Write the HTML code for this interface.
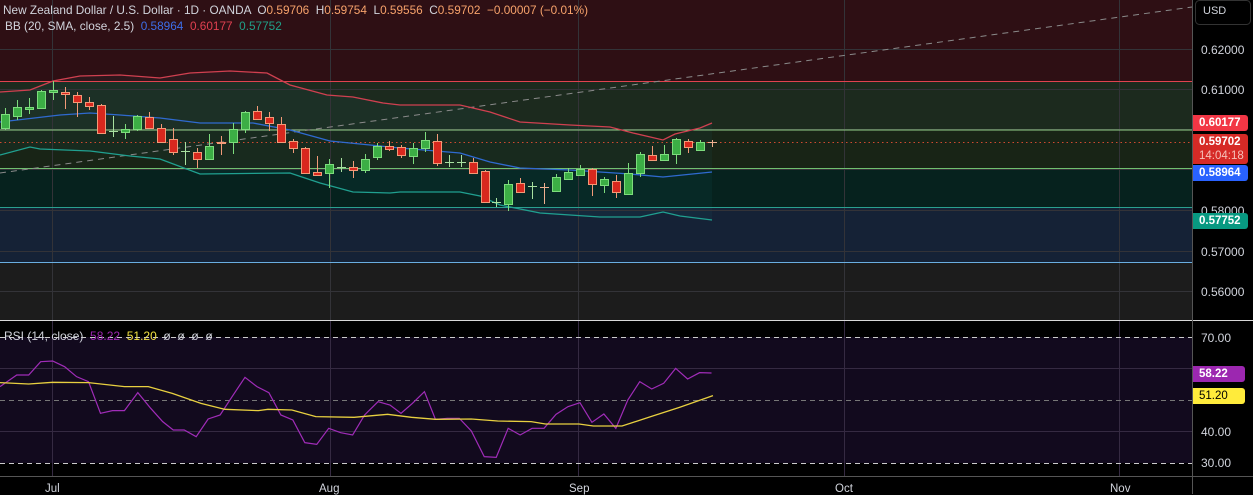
<!DOCTYPE html>
<html><head><meta charset="utf-8"><style>
html,body{margin:0;padding:0;background:#000;width:1253px;height:494px;overflow:hidden;font-family:"Liberation Sans",sans-serif;}
.t{position:absolute;font-size:11.8px;color:#d1d4dc;white-space:nowrap}
.ax{position:absolute;left:1201px;font-size:12px;color:#d1d4dc}
.tag{position:absolute;left:1193px;width:55px;font-size:11.5px;color:#fff;padding-left:6px;box-sizing:border-box;border-radius:0 3px 3px 0;line-height:16px;font-weight:bold}
.tm{position:absolute;top:483px;font-size:11.5px;color:#d1d4dc}
</style></head><body>
<svg width="1253" height="494" style="position:absolute;left:0;top:0">
<rect x="0" y="0" width="1192" height="81" fill="#2e0f14"/>
<rect x="0" y="81" width="1192" height="49" fill="#1c2a1e"/>
<rect x="0" y="130" width="1192" height="38" fill="#182416"/>
<rect x="0" y="168" width="1192" height="39" fill="#06221e"/>
<rect x="0" y="207" width="1192" height="55" fill="#152236"/>
<rect x="0" y="262" width="1192" height="58" fill="#1c1c1c"/>
<polygon fill="rgba(40,160,170,0.06)" points="0,92 30,90 53,81 80,76 120,75 160,78 190,73 230,71 267,73 290,85 327,95 353,97 383,103 400,105 460,105 490,112 520,122 570,125 610,127 633,133 663,140 675,134 700,128 712,123 712,220 680,216 663,212 640,217 600,217 540,213 500,205 480,196 460,192 400,192 390,193 353,192 320,183 290,173 200,174 160,159 130,156 90,151 40,149 30,147 0,155"/>
<g stroke="#333338" stroke-width="1">
<line x1="0" y1="49.5" x2="1192" y2="49.5"/><line x1="0" y1="89.5" x2="1192" y2="89.5"/><line x1="0" y1="129.5" x2="1192" y2="129.5"/><line x1="0" y1="169.5" x2="1192" y2="169.5"/><line x1="0" y1="210.5" x2="1192" y2="210.5"/><line x1="0" y1="251.5" x2="1192" y2="251.5"/><line x1="0" y1="291.5" x2="1192" y2="291.5"/>
<line x1="52.5" y1="0" x2="52.5" y2="476"/><line x1="330.5" y1="0" x2="330.5" y2="476"/><line x1="578.5" y1="0" x2="578.5" y2="476"/><line x1="844.5" y1="0" x2="844.5" y2="476"/><line x1="1119.5" y1="0" x2="1119.5" y2="476"/>
</g>
<line x1="0" y1="81.5" x2="1192" y2="81.5" stroke="#e0434f"/>
<line x1="0" y1="130" x2="1192" y2="130" stroke="#95d08a"/>
<line x1="0" y1="168.5" x2="1192" y2="168.5" stroke="#6fc070"/>
<line x1="0" y1="207.5" x2="1192" y2="207.5" stroke="#2aa090"/>
<line x1="0" y1="262.5" x2="1192" y2="262.5" stroke="#6aaee0"/>
<line x1="0" y1="173" x2="1192" y2="7" stroke="#8a8a8a" stroke-dasharray="6,5"/>
<line x1="0" y1="142.5" x2="1192" y2="142.5" stroke="#d04a30" stroke-dasharray="1.5,3"/>
<polyline fill="none" stroke="#d04050" stroke-width="1.3" points="0,92 30,90 53,81 80,76 120,75 160,78 190,73 230,71 267,73 290,85 327,95 353,97 383,103 400,105 460,105 490,112 520,122 570,125 610,127 633,133 663,140 675,134 700,128 712,123"/>
<polyline fill="none" stroke="#2f6ad0" stroke-width="1.3" points="0,122 60,115 90,113 120,115 160,118 200,123 253,123 290,130 330,141 370,145 400,148 460,153 490,162 520,168 570,170 630,174 663,177 712,172"/>
<polyline fill="none" stroke="#20a090" stroke-width="1.3" points="0,155 30,147 40,149 90,151 130,156 160,159 200,174 290,173 320,183 353,192 390,193 400,192 460,192 480,196 500,205 540,213 600,217 640,217 663,212 680,216 712,220"/>
<g stroke-width="1">
<g stroke="#7ddc7d" fill="#3cae45">
<line x1="5.5" y1="108" x2="5.5" y2="130"/><rect x="1.5" y="114.5" width="8" height="14"/>
<line x1="17.5" y1="100" x2="17.5" y2="120"/><rect x="13.5" y="107.5" width="8" height="9"/>
<line x1="29.5" y1="98" x2="29.5" y2="114"/><rect x="25.5" y="107.5" width="8" height="2"/>
<line x1="41.5" y1="90" x2="41.5" y2="109"/><rect x="37.5" y="91.5" width="8" height="17"/>
<line x1="53.5" y1="81" x2="53.5" y2="100"/><rect x="49.5" y="90.5" width="8" height="2"/>
<line x1="125.5" y1="124" x2="125.5" y2="139"/><rect x="121.5" y="129.5" width="8" height="3"/>
<line x1="137.5" y1="115" x2="137.5" y2="131"/><rect x="133.5" y="116.5" width="8" height="13"/>
<line x1="209.5" y1="134" x2="209.5" y2="160"/><rect x="205.5" y="146.5" width="8" height="13"/>
<line x1="233.5" y1="123" x2="233.5" y2="154"/><rect x="229.5" y="129.5" width="8" height="13"/>
<line x1="245.5" y1="111" x2="245.5" y2="133"/><rect x="241.5" y="112.5" width="8" height="17"/>
<line x1="329.5" y1="159" x2="329.5" y2="188"/><rect x="325.5" y="164.5" width="8" height="9"/>
<line x1="365.5" y1="154" x2="365.5" y2="173"/><rect x="361.5" y="159.5" width="8" height="11"/>
<line x1="377.5" y1="143" x2="377.5" y2="160"/><rect x="373.5" y="146.5" width="8" height="11"/>
<line x1="413.5" y1="143" x2="413.5" y2="164"/><rect x="409.5" y="148.5" width="8" height="8"/>
<line x1="425.5" y1="132" x2="425.5" y2="152"/><rect x="421.5" y="140.5" width="8" height="8"/>
<line x1="508.5" y1="180" x2="508.5" y2="211"/><rect x="504.5" y="184.5" width="8" height="20"/>
<line x1="556.5" y1="174" x2="556.5" y2="192"/><rect x="552.5" y="177.5" width="8" height="14"/>
<line x1="568.5" y1="168" x2="568.5" y2="180"/><rect x="564.5" y="172.5" width="8" height="7"/>
<line x1="580.5" y1="165" x2="580.5" y2="176"/><rect x="576.5" y="169.5" width="8" height="6"/>
<line x1="604.5" y1="177" x2="604.5" y2="193"/><rect x="600.5" y="179.5" width="8" height="6"/>
<line x1="628.5" y1="163" x2="628.5" y2="195"/><rect x="624.5" y="173.5" width="8" height="21"/>
<line x1="640.5" y1="152" x2="640.5" y2="177"/><rect x="636.5" y="154.5" width="8" height="19"/>
<line x1="664.5" y1="145" x2="664.5" y2="161"/><rect x="660.5" y="154.5" width="8" height="6"/>
<line x1="676.5" y1="138" x2="676.5" y2="164"/><rect x="672.5" y="139.5" width="8" height="15"/>
<line x1="700.5" y1="140" x2="700.5" y2="151"/><rect x="696.5" y="142.5" width="8" height="8"/>
</g>
<g stroke="#f29a78" fill="#d8281e">
<line x1="65.5" y1="87" x2="65.5" y2="109"/><rect x="61.5" y="92.5" width="8" height="2"/>
<line x1="77.5" y1="92" x2="77.5" y2="117"/><rect x="73.5" y="95.5" width="8" height="7"/>
<line x1="89.5" y1="97" x2="89.5" y2="110"/><rect x="85.5" y="102.5" width="8" height="4"/>
<line x1="101.5" y1="104" x2="101.5" y2="134"/><rect x="97.5" y="105.5" width="8" height="28"/>
<line x1="149.5" y1="112" x2="149.5" y2="129"/><rect x="145.5" y="117.5" width="8" height="11"/>
<line x1="161.5" y1="124" x2="161.5" y2="143"/><rect x="157.5" y="128.5" width="8" height="14"/>
<line x1="173.5" y1="128" x2="173.5" y2="155"/><rect x="169.5" y="139.5" width="8" height="13"/>
<line x1="197.5" y1="148" x2="197.5" y2="168"/><rect x="193.5" y="152.5" width="8" height="7"/>
<line x1="221.5" y1="136" x2="221.5" y2="155"/><rect x="217.5" y="142.5" width="8" height="1"/>
<line x1="257.5" y1="106" x2="257.5" y2="120"/><rect x="253.5" y="111.5" width="8" height="8"/>
<line x1="269.5" y1="112" x2="269.5" y2="131"/><rect x="265.5" y="117.5" width="8" height="6"/>
<line x1="281.5" y1="117" x2="281.5" y2="143"/><rect x="277.5" y="124.5" width="8" height="18"/>
<line x1="293.5" y1="139" x2="293.5" y2="153"/><rect x="289.5" y="141.5" width="8" height="7"/>
<line x1="305.5" y1="147" x2="305.5" y2="174"/><rect x="301.5" y="148.5" width="8" height="25"/>
<line x1="317.5" y1="156" x2="317.5" y2="176"/><rect x="313.5" y="172.5" width="8" height="3"/>
<line x1="353.5" y1="161" x2="353.5" y2="178"/><rect x="349.5" y="167.5" width="8" height="3"/>
<line x1="389.5" y1="141" x2="389.5" y2="151"/><rect x="385.5" y="146.5" width="8" height="3"/>
<line x1="401.5" y1="145" x2="401.5" y2="158"/><rect x="397.5" y="147.5" width="8" height="8"/>
<line x1="437.5" y1="134" x2="437.5" y2="166"/><rect x="433.5" y="141.5" width="8" height="22"/>
<line x1="473.5" y1="158" x2="473.5" y2="174"/><rect x="469.5" y="162.5" width="8" height="11"/>
<line x1="485.5" y1="170" x2="485.5" y2="203"/><rect x="481.5" y="171.5" width="8" height="31"/>
<line x1="520.5" y1="178" x2="520.5" y2="193"/><rect x="516.5" y="183.5" width="8" height="9"/>
<line x1="592.5" y1="168" x2="592.5" y2="196"/><rect x="588.5" y="169.5" width="8" height="15"/>
<line x1="616.5" y1="175" x2="616.5" y2="198"/><rect x="612.5" y="181.5" width="8" height="11"/>
<line x1="652.5" y1="146" x2="652.5" y2="161"/><rect x="648.5" y="155.5" width="8" height="5"/>
<line x1="688.5" y1="139" x2="688.5" y2="153"/><rect x="684.5" y="141.5" width="8" height="6"/>
</g>
<g stroke="#a8e0a0">
<line x1="113.5" y1="116" x2="113.5" y2="137"/><line x1="109" y1="131.5" x2="118" y2="131.5"/>
<line x1="185.5" y1="142" x2="185.5" y2="165"/><line x1="181" y1="151.5" x2="190" y2="151.5"/>
<line x1="341.5" y1="158" x2="341.5" y2="172"/><line x1="337" y1="167.5" x2="346" y2="167.5"/>
<line x1="449.5" y1="155" x2="449.5" y2="167"/><line x1="445" y1="162.5" x2="454" y2="162.5"/>
<line x1="461.5" y1="155" x2="461.5" y2="167"/><line x1="457" y1="162.5" x2="466" y2="162.5"/>
<line x1="496.5" y1="198" x2="496.5" y2="207"/><line x1="492" y1="202.5" x2="501" y2="202.5"/>
<line x1="532.5" y1="182" x2="532.5" y2="199"/><line x1="528" y1="186.5" x2="537" y2="186.5"/>
</g>
<g stroke="#f0b090">
<line x1="544.5" y1="183" x2="544.5" y2="204"/><line x1="540" y1="187.5" x2="549" y2="187.5"/>
<line x1="712.5" y1="140" x2="712.5" y2="147"/><line x1="708" y1="142.5" x2="717" y2="142.5"/>
</g>
</g>
<line x1="0" y1="320.5" x2="1253" y2="320.5" stroke="#d8d8d8"/>
<line x1="1192.5" y1="0" x2="1192.5" y2="494" stroke="#555"/>
<line x1="0" y1="476.5" x2="1253" y2="476.5" stroke="#555"/>
<rect x="0" y="337" width="1192" height="126" fill="#120a1e"/>
<g stroke="#352a42"><line x1="0" y1="368.5" x2="1192" y2="368.5"/><line x1="0" y1="431.5" x2="1192" y2="431.5"/>
<line x1="52.5" y1="321" x2="52.5" y2="476"/><line x1="330.5" y1="321" x2="330.5" y2="476"/><line x1="578.5" y1="321" x2="578.5" y2="476"/><line x1="844.5" y1="321" x2="844.5" y2="476"/><line x1="1119.5" y1="321" x2="1119.5" y2="476"/></g>
<line x1="0" y1="337.5" x2="1192" y2="337.5" stroke="#ccc" stroke-dasharray="5,4"/>
<line x1="0" y1="400.5" x2="1192" y2="400.5" stroke="#777" stroke-dasharray="5,4"/>
<line x1="0" y1="463.5" x2="1192" y2="463.5" stroke="#ccc" stroke-dasharray="5,4"/>
<g transform="translate(0,320) scale(0.4785,0.3333)">
<polyline fill="none" stroke="#a02cb8" stroke-width="1.2" vector-effect="non-scaling-stroke" points="0,200 35,165 60,165 85,125 110,123 135,140 160,170 185,185 210,280 235,272 260,272 288,218 315,265 340,305 362,330 385,330 410,350 435,297 460,285 485,230 512,172 537,200 562,218 587,285 612,300 637,368 662,373 687,325 712,338 737,345 762,285 790,245 815,255 838,280 862,250 887,215 910,298 935,295 960,295 985,333 1012,410 1037,412 1062,325 1087,345 1112,325 1137,325 1162,283 1187,260 1212,248 1237,307 1262,282 1287,325 1312,240 1337,185 1362,207 1387,190 1412,145 1437,177 1462,158 1487,159"/>
<polyline fill="none" stroke="#e8d040" stroke-width="1.3" vector-effect="non-scaling-stroke" points="0,188 60,192 110,187 185,188 260,200 310,200 360,220 420,250 470,268 540,272 560,268 610,270 660,290 740,292 810,283 860,292 910,298 985,297 1040,303 1110,305 1140,312 1210,312 1240,318 1300,318 1360,290 1420,262 1490,227"/>
</g>
<rect x="1195.5" y="0.5" width="55" height="24" rx="4" fill="#000" stroke="#333"/>
</svg>
<div class="t" style="left:3px;top:3px">New Zealand Dollar / U.S. Dollar · 1D · OANDA &nbsp;O<span style="color:#f7a26b">0.59706</span> &nbsp;H<span style="color:#f7a26b">0.59754</span> &nbsp;L<span style="color:#f7a26b">0.59556</span> &nbsp;C<span style="color:#f7a26b">0.59702</span> &nbsp;<span style="color:#f7a26b">−0.00007 (−0.01%)</span></div>
<div class="t" style="left:5px;top:19px">BB (20, SMA, close, 2.5) &nbsp;<span style="color:#3d6ee8">0.58964</span> &nbsp;<span style="color:#e04050">0.60177</span> &nbsp;<span style="color:#20a088">0.57752</span></div>
<div class="t" style="left:4px;top:329px;font-size:12px">RSI (14, close) &nbsp;<span style="color:#9c27b0">58.22</span> &nbsp;<span style="color:#f0e040">51.20</span> &nbsp;ø &nbsp;ø &nbsp;ø &nbsp;ø</div>
<div class="ax" style="left:1203px;top:5px;font-size:11px">USD</div>
<div class="ax" style="top:43px">0.62000</div>
<div class="ax" style="top:83px">0.61000</div>
<div class="ax" style="top:204px">0.58000</div>
<div class="ax" style="top:245px">0.57000</div>
<div class="ax" style="top:285px">0.56000</div>
<div class="ax" style="top:331px">70.00</div>
<div class="ax" style="top:425px">40.00</div>
<div class="ax" style="top:456px">30.00</div>
<div class="tag" style="top:115px;background:#f23645">0.60177</div>
<div class="tag" style="top:134px;height:30px;background:#d62a26;line-height:14px;padding-top:1px">0.59702<br><span style="font-weight:normal;color:#f5c0b8">14:04:18</span></div>
<div class="tag" style="top:165px;background:#2962ff">0.58964</div>
<div class="tag" style="top:213px;background:#089981">0.57752</div>
<div class="tag" style="top:366px;width:52px;background:#9c27b0">58.22</div>
<div class="tag" style="top:388px;width:52px;background:#ffeb3b;color:#000;font-weight:normal">51.20</div>
<div class="tm" style="left:45px">Jul</div>
<div class="tm" style="left:319px">Aug</div>
<div class="tm" style="left:569px">Sep</div>
<div class="tm" style="left:835px">Oct</div>
<div class="tm" style="left:1110px">Nov</div>
</body></html>
